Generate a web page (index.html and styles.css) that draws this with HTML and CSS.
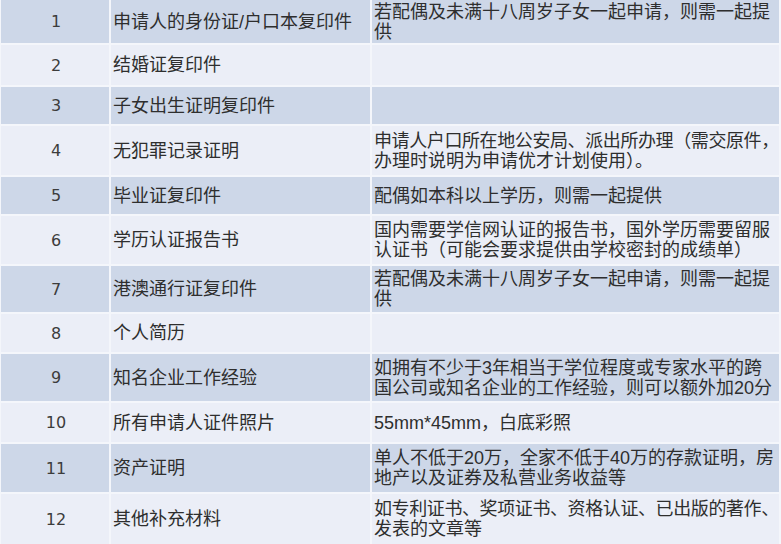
FILE: index.html
```html
<!DOCTYPE html>
<html lang="zh-CN">
<head>
<meta charset="utf-8">
<title>申请材料清单</title>
<link rel="stylesheet" href="styles.css">
</head>
<body>
<div class="table">
  <div class="row dark h45"><div class="num">1</div><div class="name">申请人的身份证/户口本复印件</div><div class="note"><p class="txt">若配偶及未满十八周岁子女一起申请，则需一起提<br>供</p></div></div>
  <div class="row light h42"><div class="num">2</div><div class="name">结婚证复印件</div><div class="note"></div></div>
  <div class="row dark h39"><div class="num">3</div><div class="name">子女出生证明复印件</div><div class="note"></div></div>
  <div class="row light h51"><div class="num">4</div><div class="name">无犯罪记录证明</div><div class="note"><p class="txt"><span class="tight">申请人户口所在地公安局、派出所办理（需交原件，</span><br>办理时说明为申请优才计划使用）。</p></div></div>
  <div class="row dark h39"><div class="num">5</div><div class="name">毕业证复印件</div><div class="note"><p class="txt">配偶如本科以上学历，则需一起提供</p></div></div>
  <div class="row light h50"><div class="num">6</div><div class="name">学历认证报告书</div><div class="note"><p class="txt">国内需要学信网认证的报告书，国外学历需要留服<br>认证书（可能会要求提供由学校密封的成绩单）</p></div></div>
  <div class="row dark h48"><div class="num">7</div><div class="name">港澳通行证复印件</div><div class="note"><p class="txt">若配偶及未满十八周岁子女一起申请，则需一起提<br>供</p></div></div>
  <div class="row light h40"><div class="num">8</div><div class="name">个人简历</div><div class="note"></div></div>
  <div class="row dark h49"><div class="num">9</div><div class="name">知名企业工作经验</div><div class="note"><p class="txt">如拥有不少于3年相当于学位程度或专家水平的跨<br>国公司或知名企业的工作经验，则可以额外加20分</p></div></div>
  <div class="row light h41"><div class="num">10</div><div class="name">所有申请人证件照片</div><div class="note"><p class="txt">55mm*45mm，白底彩照</p></div></div>
  <div class="row dark h50"><div class="num">11</div><div class="name">资产证明</div><div class="note"><p class="txt">单人不低于20万，全家不低于40万的存款证明，房<br>地产以及证券及私营业务收益等</p></div></div>
  <div class="row light h50 last"><div class="num">12</div><div class="name">其他补充材料</div><div class="note"><p class="txt"><span class="tight">如专利证书、奖项证书、资格认证、已出版的著作、</span><br>发表的文章等</p></div></div>
</div>
</body>
</html>
```
FILE: styles.css
```css
html, body {
  margin: 0;
  padding: 0;
  background: #f4f6fb;
}
body {
  width: 781px;
  height: 544px;
  overflow: hidden;
  font-family: "Liberation Sans", "Noto Sans CJK SC", sans-serif;
  color: #2e2e2e;
}
.table {
  display: flex;
  flex-direction: column;
  gap: 2px;
  padding: 0 2px 0 1px;
  background: #f4f6fb;
}
.row {
  display: grid;
  grid-template-columns: 108px 259px 1fr;
  column-gap: 2px;
}
.row > div {
  display: flex;
  align-items: center;
  overflow: hidden;
}
.dark > div { background: #cdd7e8; }
.light > div { background: #ebeef7; }
.h45 { height: 43px; }
.h42 { height: 40px; }
.h39 { height: 37px; }
.h51 { height: 49px; }
.h50 { height: 48px; }
.h48 { height: 46px; }
.h40 { height: 38px; }
.h49 { height: 47px; }
.h41 { height: 39px; }
.last { height: 50px; }
.num {
  justify-content: center;
  font-family: "DejaVu Sans", "Liberation Sans", sans-serif;
  font-size: 16px;
  color: #3c3c3c;
  padding-left: 2px;
}
.name {
  padding-left: 2px;
  font-size: 18px;
  line-height: 20px;
  white-space: nowrap;
}
.note {
  padding-left: 2px;
  font-size: 18px;
  line-height: 20px;
  white-space: nowrap;
}
.txt {
  margin: 0;
}
.tight {
  letter-spacing: -0.4px;
}
```
